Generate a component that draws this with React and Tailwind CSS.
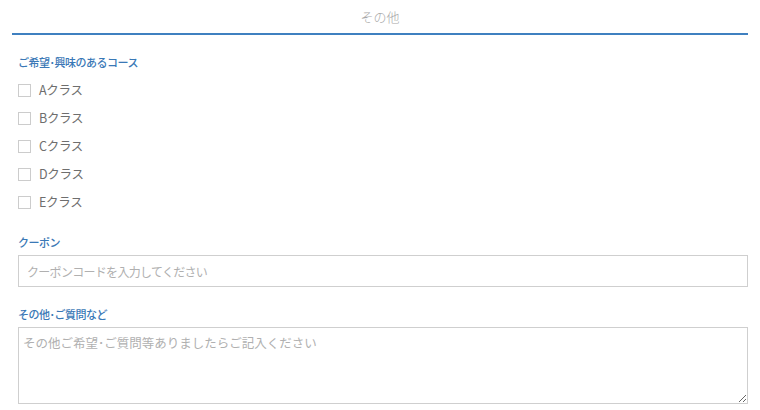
export default function App() {
  const font = { fontFamily: '"Noto Sans CJK JP", "Noto Sans", sans-serif' };
  const classes = ["A", "B", "C", "D", "E"];
  return (
    <div className="w-[760px] h-[410px] bg-white overflow-hidden" style={font}>
      <div className="mx-3">
        <div className="h-[33px] flex items-center justify-center text-[13px] text-[#a8a8a8] font-light">
          その他
        </div>
        <div className="h-[2px] bg-[#3f80c0]" />
      </div>
      <div className="px-[18px]">
        <div className="mt-[19px] h-[16px] leading-[16px] text-[11px] tracking-[-0.5px] font-medium text-[#3a78b6]">
          ご希望･興味のあるコース
        </div>
        <div className="mt-[6px] flex flex-col">
          {classes.map((c) => (
            <label key={c} className="h-[28px] flex items-center gap-[8px]">
              <span className="w-[13px] h-[13px] border border-[#cccccc] bg-white" />
              <span className="text-[12.5px] tracking-[-0.3px] text-[#6e6e6e] leading-none">{c}クラス</span>
            </label>
          ))}
        </div>
        <div className="mt-[18px] h-[16px] leading-[16px] text-[11px] tracking-[-0.5px] font-medium text-[#3a78b6]">
          クーポン
        </div>
        <input
          className="mt-[5px] block w-[730px] h-[32px] border border-[#cfcfcf] px-[8px] text-[12px] tracking-[-0.7px] outline-none placeholder:text-[#b0b0b0]"
          placeholder="クーポンコードを入力してください"
          style={font}
        />
        <div className="mt-[19px] h-[16px] leading-[16px] text-[11px] tracking-[-0.5px] font-medium text-[#3a78b6]">
          その他･ご質問など
        </div>
        <textarea
          className="mt-[5px] block w-[730px] h-[77px] border border-[#cfcfcf] px-[4px] py-[6px] text-[12.5px] outline-none placeholder:text-[#b0b0b0]"
          placeholder="その他ご希望･ご質問等ありましたらご記入ください"
          style={font}
        />
      </div>
    </div>
  );
}
